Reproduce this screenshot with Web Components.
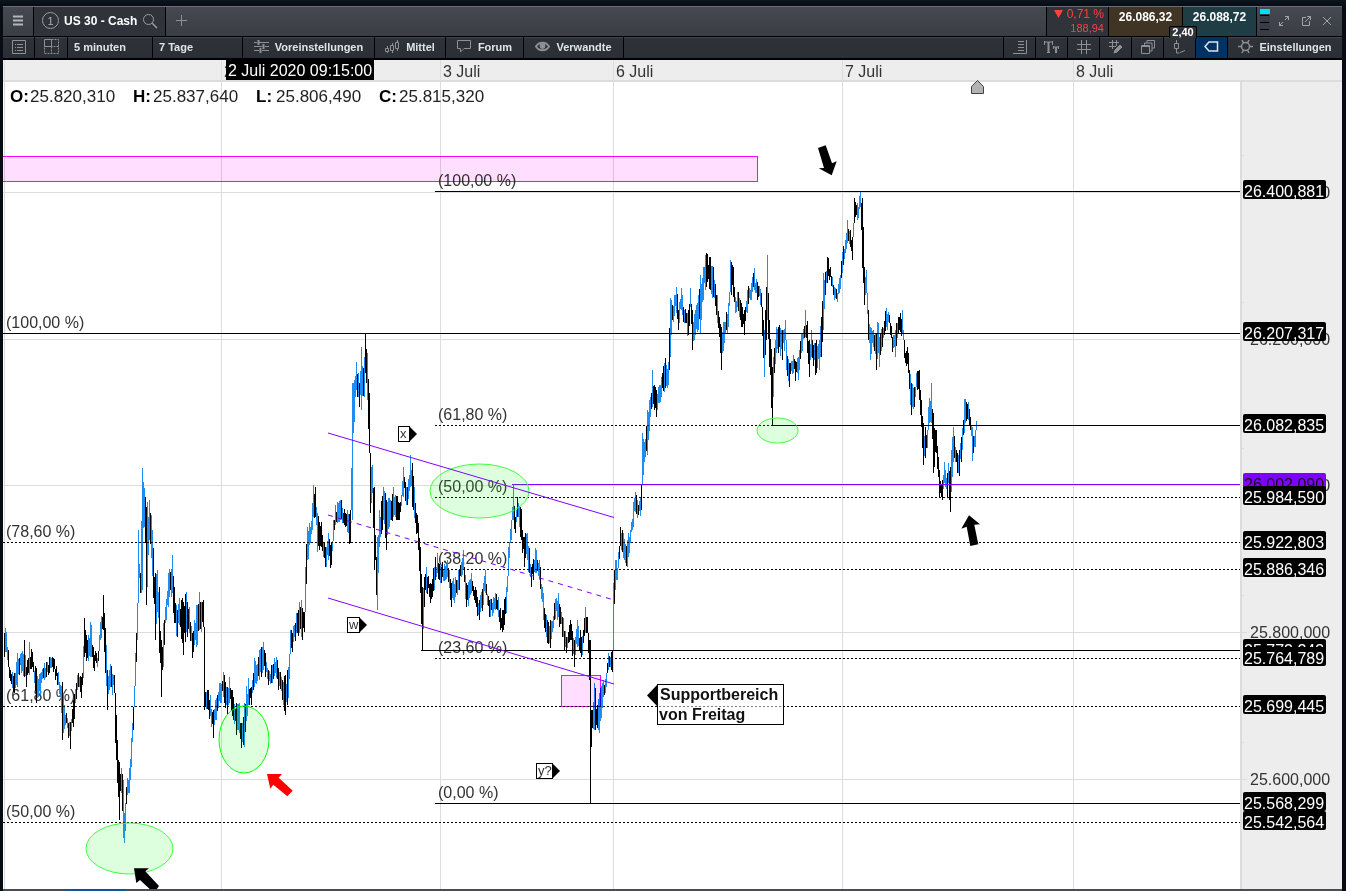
<!DOCTYPE html>
<html lang="de">
  <head>
    <meta charset="utf-8" />
    <title>US 30 - Cash</title>
    <style>
      body {
        margin: 0;
        background: #070c14;
        font-family: 'Liberation Sans', Arial, sans-serif;
      }
    </style>
  </head>
  <body>
    <template id="chartWindowTemplate">
      <style>
        :host {
          display: flex;
          flex-direction: column;
          box-sizing: border-box;
          height: 100vh;
          padding: 6px 4px 0 3px;
          overflow: hidden;
          background: linear-gradient(#0b161e, #070c14 6px);
        }

        footer {
          height: 2px;
          background: linear-gradient(90deg, #4a4d55 62px, #10559a 62px 122px, #4a4d55 122px);
        }
      </style>
      <slot></slot>
      <footer></footer>
    </template>

    <template id="titleBarTemplate">
      <style>
        :host {
          display: flex;
          height: 29px;
          border-top: 1px solid #6a6d77;
          border-bottom: 1px solid #000;
          background: linear-gradient(#464952, #3a3d44);
          color: #fff;
          font-size: 12px;
          font-weight: bold;
        }
      </style>
      <slot></slot>
    </template>

    <template id="symbolTabTemplate">
      <style>
        :host {
          display: flex;
          align-items: center;
          gap: 5px;
          padding: 0 7px 2px 8px;
          border: 1px solid #000;
          border-width: 0 1px;
          background: #30333a;
        }

        button {
          display: flex;
          padding: 0;
          border: 0;
          background: none;
        }

        svg {
          fill: none;
          stroke: #9a9da2;
        }

        i {
          display: flex;
          align-items: center;
          justify-content: center;
          width: 15px;
          height: 15px;
          border: 1px solid #9a9da2;
          border-radius: 50%;
          color: #b0b2b6;
          font-style: normal;
          font-weight: normal;
          font-size: 11px;
        }
      </style>
      <i>1</i>
      <slot></slot>
      <button aria-label="Suchen">
        <svg width="16" height="16">
          <circle cx="6.5" cy="6.5" r="5" />
          <path d="M10.2 10.2L15 15" stroke-width="1.5" />
        </svg>
      </button>
    </template>

    <template id="toolBarTemplate">
      <style>
        :host {
          display: flex;
          height: 21px;
          border-bottom: 2px solid #000;
          background: linear-gradient(#41444b 1px, #2f3239 1px, #2b2e35);
        }
      </style>
      <slot></slot>
    </template>

    <template id="toolButtonTemplate">
      <style>
        :host {
          display: flex;
          box-sizing: border-box;
          border-right: 1px solid #000;
        }

        :host([first]) {
          margin-left: auto;
          border-left: 1px solid #000;
        }

        :host([last]) {
          border: 0;
        }

        :host([active]) {
          background: #003264;
        }

        button {
          display: flex;
          flex: 1;
          align-items: center;
          justify-content: center;
          gap: 6px;
          padding: 0 0 2px;
          border: 0;
          background: none;
          color: #dce6e6;
          font: bold 11px 'Liberation Sans', Arial, sans-serif;
          white-space: nowrap;
        }

        :host([left]) button {
          justify-content: flex-start;
          padding-left: 6px;
        }

        ::slotted(svg) {
          fill: none;
          stroke: #8d9196;
        }

        :host([active]) ::slotted(svg) {
          stroke: #dce6e6;
        }
      </style>
      <button><slot></slot></button>
    </template>

    <template id="quoteBoxTemplate">
      <style>
        :host {
          position: relative;
          display: flex;
          margin-left: auto;
          border-left: 1px solid #000;
        }

        .change {
          width: 57px;
          padding-right: 4px;
          background: #30333a;
          color: #ff4040;
          font-weight: normal;
          line-height: 15px;
          text-align: right;
        }

        .change small {
          display: block;
          font-size: 11px;
          line-height: 12px;
        }

        button {
          width: 74px;
          padding: 0 0 9px;
          border: 0;
          border-left: 1px solid #000;
          color: #fff;
          font: bold 12px 'Liberation Sans', Arial, sans-serif;
        }

        .sell {
          background: #403424;
        }

        .buy {
          background: #1f3d44;
        }

        output {
          position: absolute;
          right: 59px;
          top: 19px;
          width: 26px;
          border: 1px solid #000;
          border-bottom: 0;
          border-radius: 2px 2px 0 0;
          background: #30333a;
          font-size: 11px;
          line-height: 11px;
          text-align: center;
        }
      </style>
      <div class="change">
        <svg width="9" height="8"><path d="M0 0H9L4.500 8z" fill="#ff4040" /></svg>
        0,71 %<small>188,94</small>
      </div>
      <button class="sell">26.086,32</button>
      <button class="buy">26.088,72</button>
      <output>2,40</output>
    </template>

    <template id="windowControlsTemplate">
      <style>
        :host {
          display: flex;
          align-items: center;
          width: 85px;
          border-left: 1px solid #000;
        }

        .depth {
          margin: 0 -2px 0 3px;
        }

        button {
          display: flex;
          margin-left: 10px;
          padding: 0 0 2px;
          border: 0;
          background: none;
        }

        button svg {
          fill: none;
          stroke: #a2a5aa;
        }
      </style>
      <svg class="depth" width="10" height="26">
        <rect width="10" height="26" fill="#393c46" />
        <rect width="10" height="5" fill="#00dcff" />
        <path d="M0 6h9v1H0zM0 13h9v1H0zM0 20h9v1H0z" />
      </svg>
      <button aria-label="Vergrößern">
        <svg width="12" height="12">
          <path d="M7 1.500h3.500V5M10.500 1.500L7 5M1.500 7v3.500H5M1.500 10.500L5 7" />
        </svg>
      </button>
      <button aria-label="Loslösen">
        <svg width="12" height="12">
          <path d="M6 2.500H2.500v8h7V6M7 1.500h3.500V5M10.500 1.500L5 7" />
        </svg>
      </button>
      <button aria-label="Schließen">
        <svg width="10" height="12"><path d="M1 2l8 8M9 2l-8 8" /></svg>
      </button>
    </template>

    <template id="priceChartTemplate">
      <style>
        :host {
          display: grid;
          flex: 1;
          grid-template: 20px minmax(0, 1fr) / minmax(0, 1fr) 102px;
          min-height: 0;
          background: #fff;
        }

        svg {
          display: block;
          width: 100%;
          height: 100%;
          overflow: hidden;
          font-size: 16px;
        }

        .dates {
          grid-column: 1 / 3;
          background: #ededed;
        }

        .plot {
          position: relative;
          min-height: 0;
        }

        .scale {
          background: #ededed;
        }

        .grid {
          fill: #dcdcdc;
        }

        .text {
          fill: #333;
        }

        .up {
          fill: #1e8cf0;
        }

        .zone {
          fill: #ffdcff;
          fill-opacity: 0.95;
          stroke: #f0f;
          mix-blend-mode: multiply;
        }

        .mark {
          fill: #00ff00;
          fill-opacity: 0.13;
          stroke: #3cff3c;
        }

        .channel {
          stroke: #8000ff;
        }

        dl {
          position: absolute;
          top: 7px;
          left: 7px;
          display: grid;
          grid-template-columns: repeat(4, 123px);
          margin: 0;
          font-size: 17px;
          line-height: 20px;
        }

        dl div {
          display: flex;
        }

        dt {
          min-width: 20px;
          font-weight: bold;
        }

        dd {
          margin: 0;
          color: #222;
        }
      </style>
      <svg class="dates"></svg>
      <div class="plot">
        <svg></svg>
        <dl>
          <div><dt>O:</dt><dd>25.820,310</dd></div>
          <div><dt>H:</dt><dd>25.837,640</dd></div>
          <div><dt>L:</dt><dd>25.806,490</dd></div>
          <div><dt>C:</dt><dd>25.815,320</dd></div>
        </dl>
      </div>
      <svg class="scale"></svg>
    </template>

    <script type="text/javascript">
      class TemplateElement extends HTMLElement {
        constructor() {
          super();
          this.attachShadow({ mode: 'open' });
          this.shadowRoot.append(
            document
              .getElementById(this.constructor.template)
              .content.cloneNode(true)
          );
        }
      }

      class ChartWindow extends TemplateElement {
        static template = 'chartWindowTemplate';
      }

      class TitleBar extends TemplateElement {
        static template = 'titleBarTemplate';
      }

      class SymbolTab extends TemplateElement {
        static template = 'symbolTabTemplate';
      }

      class ToolBar extends TemplateElement {
        static template = 'toolBarTemplate';
      }

      class ToolButton extends TemplateElement {
        static template = 'toolButtonTemplate';

        connectedCallback() {
          const name = this.getAttribute('name');
          if (name) {
            this.shadowRoot.querySelector('button').ariaLabel = name;
          }
          if (this.hasAttribute('width')) {
            this.style.width = this.getAttribute('width') + 'px';
          }
        }
      }

      class QuoteBox extends TemplateElement {
        static template = 'quoteBoxTemplate';
      }

      class WindowControls extends TemplateElement {
        static template = 'windowControlsTemplate';
      }

      // x, high, low of the turning bars, in chart units
      const TURNS = `
        4,633,657 6,632,652 8,650,667 9,670,678 12,672,688 14,673,693 17,653,687 21,653,673
        24,640,677 26,667,687 29,642,675 32,652,667 36,668,703 40,673,695 44,663,680 49,657,673
        53,658,672 57,673,685 60,685,697 62,682,740 65,715,725 70,722,749 73,700,727 78,673,687
        81,677,698 83,646,678 84,618,657 87,640,658 90,622,657 93,647,668 97,658,667 100,622,640
        103,595,630 105,628,673 107,670,710 110,664,687 114,675,693 115,700,743 117,740,783
        119,762,820 121,768,793 123,780,838 124,813,843 127,778,795 129,768,793 131,738,767
        133,707,730 135,653,680 137,603,640 138,530,575 140,573,593 142,468,590 143,482,528
        145,497,543 146,507,605 149,500,540 151,515,558 153,548,598 155,573,640 157,570,612
        159,587,653 161,640,697 163,623,667 165,607,623 168,573,607 172,555,593 174,587,623
        177,610,637 179,598,625 183,602,655 186,592,632 189,607,633 192,633,658 196,605,647
        199,592,630 203,600,627 204,680,710 208,690,710 213,710,738 215,700,720 220,683,703
        223,672,697 227,687,715 229,677,703 233,697,720 236,703,735 239,703,733 241,723,748
        244,703,747 248,678,705 251,687,705 254,658,687 259,650,680 263,642,670 268,670,685
        272,665,683 276,657,678 282,680,700 285,675,715 288,667,698 290,630,650 292,633,652
        296,613,633 301,600,637 304,612,632 305,567,607 307,527,560 310,527,543 313,485,517
        315,487,517 317,513,552 321,522,547 325,547,567 328,533,560 331,543,565 333,520,540
        335,505,525 340,500,520 345,513,527 350,510,543 352,383,520 353,383,433 356,362,390
        359,383,407 361,347,410 364,357,397 365,334,373 367,353,400 369,393,453 370,453,513
        372,465,493 374,487,570 376,557,595 377,537,610 379,510,547 383,487,520 386,500,550
        389,498,527 393,487,517 399,503,520 403,467,497 407,487,505 410,455,487 412,463,507
        415,503,523 418,523,550 420,547,593 422,587,650 424,577,607 426,567,593 430,583,603
        434,567,590 437,553,573 441,567,583 447,560,577 451,583,607 455,577,597 459,570,590
        463,550,570 466,583,607 471,573,593 475,587,603 479,600,620 485,570,593 489,600,617
        495,593,610 502,610,632 506,587,613 508,547,573 511,520,540 513,485,520 515,517,533
        517,497,517 520,507,537 524,537,567 527,533,560 531,567,587 536,550,573 539,560,580
        543,593,620 547,620,643 550,620,648 554,603,620 558,593,617 562,617,637 566,637,653
        570,620,640 574,640,667 577,620,647 581,637,657 585,607,633 587,617,633 589,640,680
        590,640,803 591,710,747 594,683,730 597,705,728 599,693,733 603,680,697 606,673,687
        608,653,670 612,651,672 613,583,633 615,560,590 617,568,580 620,527,543 622,530,552
        627,540,567 630,530,543 633,502,527 635,492,512 637,500,518 640,498,516 641,484,510
        642,433,484 644,442,462 647,410,455 650,397,417 652,370,407 656,390,417 661,377,397
        664,363,392 668,362,385 670,298,357 672,305,320 676,287,313 678,310,330 681,288,310
        683,307,322 688,310,335 690,288,307 692,310,350 695,310,335 698,295,330 700,275,333
        703,267,300 706,253,287 710,257,290 713,267,297 717,295,323 719,317,337 721,327,370
        724,322,343 728,303,327 730,260,290 733,267,297 735,297,313 737,292,307 741,303,327
        744,310,335 747,290,313 751,283,300 754,268,290 757,282,300 761,293,307 764,330,377
        766,287,340 767,255,320 769,320,367 772,367,425 773,357,397 776,327,353 778,327,353
        782,330,360 785,320,340 786,340,370 789,363,387 793,355,373 798,357,380 801,333,353
        805,310,337 809,340,377 811,330,357 815,343,375 819,340,370 821,317,357 823,273,330
        825,272,295 827,257,283 830,267,277 834,287,300 837,293,302 839,278,293 842,252,273
        845,240,253 847,220,243 852,237,260 854,198,220 857,203,220 860,192,207 862,198,268
        864,267,305 866,270,293 868,310,340 870,327,360 873,330,347 876,333,370 878,323,353
        879,337,367 882,327,347 886,308,327 889,315,323 892,337,352 895,330,357 898,317,333
        902,310,333 904,347,358 908,353,373 911,383,415 914,387,407 916,373,387 919,370,400
        921,400,427 923,423,465 927,430,448 928,407,430 931,383,423 933,413,473 936,430,453
        939,470,497 942,480,500 944,462,483 947,473,498 948,463,483 950,467,512 953,427,462
        957,453,473 959,450,476 962,428,450 964,399,433 968,402,420 970,417,430 972,427,461
        975,430,447 976,421,429`
        .trim()
        .split(/\s+/)
        .map(t => t.split(',').map(Number));

      const DAYS = [
        [4, ''],
        [221, '2 Juli'],
        [440, '3 Juli'],
        [613, '6 Juli'],
        [842, '7 Juli'],
        [1073, '8 Juli'],
      ];

      const STEPS = [
        [192, '26.400,000'],
        [339, '26.200,000'],
        [485, '26.000,000'],
        [632, '25.800,000'],
        [779, '25.600,000'],
      ];

      // y, price, start x, dotted
      const LEVELS = [
        [191, '26.400,881', 435, false],
        [333, '26.207,317', 3, false],
        [425, '26.082,835', 772, false],
        [484, '26.002,090', 512, false],
        [497, '25.984,590', 435, true],
        [542, '25.922,803', 3, true],
        [569, '25.886,346', 435, true],
        [650, '25.773,243', 421, false],
        [658, '25.764,789', 435, true],
        [706, '25.699,445', 3, true],
        [803, '25.568,299', 435, false],
        [822, '25.542,564', 3, true],
      ];

      const RATIOS = [
        [438, 191, '100,00'],
        [438, 425, '61,80'],
        [438, 497, '50,00'],
        [438, 569, '38,20'],
        [438, 658, '23,60'],
        [438, 803, '0,00'],
        [6, 333, '100,00'],
        [6, 542, '78,60'],
        [6, 706, '61,80'],
        [6, 822, '50,00'],
      ];

      const noise = n => {
        const v = Math.sin(n * 12.9898) * 43758.5453;
        return v - Math.floor(v);
      };

      class PriceChart extends TemplateElement {
        static template = 'priceChartTemplate';

        connectedCallback() {
          const [dates, plot, scale] = this.shadowRoot.querySelectorAll('svg');
          dates.innerHTML = `<g transform="translate(-3 -60)">${this.dates()}</g>`;
          plot.innerHTML = `<g transform="translate(-3 -80)">${this.plot()}</g>`;
          scale.innerHTML = `<g transform="translate(-1240 -80)">${this.scale()}</g>`;
        }

        dates() {
          return (
            DAYS.map(
              ([x, label]) => `
                <rect class="grid" x="${x}" y="60" width="1" height="20" />
                <text class="text" x="${x + 3}" y="77">${label}</text>`
            ).join('') +
            `<rect x="226" y="60" width="148" height="20" />
             <text x="228" y="76" fill="#fff">2 Juli 2020 09:15:00</text>`
          );
        }

        bars() {
          let up = '';
          let down = '';
          let last = null;
          const bar = (x, top, bottom, rising) => {
            // stretch over a jump so that neighbouring bars always touch
            let from = top;
            let to = bottom;
            if (last && last[1] < top) from = last[1];
            if (last && last[0] > bottom) to = last[0];
            last = [top, bottom];
            const d = `M${x} ${Math.round(from)}h1V${Math.round(to)}h-1z`;
            if (rising) up += d;
            else down += d;
          };
          TURNS.forEach(([x, top, bottom], i) => {
            const next = TURNS[i + 1] || [x + 1, top, bottom];
            const prev = TURNS[i - 1] || TURNS[i];
            const before = prev[1] + prev[2] > top + bottom;
            bar(x, top, bottom, noise(x) < 0.2 ? !before : before);
            const steps = next[0] - x;
            const rising = next[1] + next[2] < top + bottom;
            for (let k = 1; k < steps; k++) {
              const t = k / steps;
              const mid = (top + bottom) / 2 + (t * (next[1] + next[2] - top - bottom)) / 2;
              const half = ((bottom - top) * (1 - t) + (next[2] - next[1]) * t) / 2;
              const shift = (noise(x + k + 7) - 0.5) * 10;
              const size = Math.max(5, half * (0.4 + noise(x + k + 31) * 0.7));
              bar(x + k, mid + shift - size, mid + shift + size, noise(x + k) < 0.35 ? !rising : rising);
            }
          });
          return `<path class="up" d="${up}" /><path d="${down}" />`;
        }

        flag(x, y, width, label) {
          return `
            <rect x="${x + 0.5}" y="${y + 0.5}" width="${width}" height="15" fill="#fff" stroke="#000" />
            <path d="M${x + width} ${y}l8 8l-8 8z" />
            <text x="${x + 2}" y="${y + 12}" font-size="13" class="text">${label}</text>`;
        }

        plot() {
          const grid =
            DAYS.map(([x]) => `<rect class="grid" x="${x}" y="80" width="1" height="100%" />`).join('') +
            STEPS.map(([y]) => `<rect class="grid" x="3" y="${y}" width="100%" height="1" />`).join('');
          const levels = LEVELS.map(
            ([y, , x, dotted]) => `
              <line x1="${x}" x2="110%" y1="${y + 0.5}" y2="${y + 0.5}"
                stroke="${y === 484 ? '#8000ff' : '#000'}" ${dotted ? 'stroke-dasharray="2 2"' : ''} />`
          ).join('');
          const ratios = RATIOS.map(
            ([x, y, value]) => `<text class="text" x="${x}" y="${y - 5}">(${value} %)</text>`
          ).join('');
          return `
            ${grid}
            <rect class="grid" x="3" y="80" width="100%" height="2" />
            ${ratios}
            ${this.bars()}
            ${levels}
            <path d="M435 425.500H772" stroke="#000" stroke-dasharray="2 2" />
            <rect class="zone" x="0.500" y="156.500" width="757" height="25" />
            <rect class="zone" x="561.500" y="675.500" width="39" height="31" />
            <ellipse class="mark" cx="129.500" cy="848.500" rx="43.500" ry="25.500" />
            <ellipse class="mark" cx="244" cy="739.500" rx="25" ry="33.500" style="stroke: #00ff00" />
            <ellipse class="mark" cx="479.500" cy="491" rx="49.500" ry="27" />
            <ellipse class="mark" cx="777.500" cy="430.500" rx="20.500" ry="12.500" />
            <g class="channel">
              <path d="M328 433L614 517.500M328 598L614 684" />
              <path d="M328 515L614 600" stroke-dasharray="5 5" />
            </g>
            <path d="M818 148L825.700 145.300L832 163.300L836.700 161.300L831.700 175.300L818.700 168.300L824 168z" />
            <path d="M969 515.300L980 524.300L974.300 524.700L978.300 544.300L970.300 546L966.700 526.700L961.300 528.700z" />
            <path d="M267 774H282L278.700 777.700L292.700 790.700L287.300 796.300L273.300 784.700L270.300 788.700z" fill="#f00" />
            <path d="M134 868.300H149L145.300 871.300L159 886L154 893L140 880L136.300 883z" />
            <path d="M971.500 93.500V86.500L977.500 80.500L983.500 86.500V93.500z" fill="#b3b3b3" stroke="#444" />
            ${this.flag(398, 426, 11, 'x')}
            ${this.flag(347, 617, 12, 'w')}
            ${this.flag(536, 763, 16, 'y?')}
            <path d="M647 695.500L657 685V706z" />
            <rect x="657.500" y="684.500" width="126" height="40" fill="#fff" fill-opacity="0.5" stroke="#000" />
            <text font-weight="bold" fill="#111">
              <tspan x="660" y="700">Supportbereich</tspan>
              <tspan x="659" y="720">von Freitag</tspan>
            </text>`;
        }

        scale() {
          const steps = STEPS.map(
            ([y, label]) => `
              <rect class="grid" x="1240" y="${y}" width="7" height="1" />
              <rect class="grid" x="1240" y="${y - 37}" width="4" height="1" />
              <text class="text" x="1250" y="${y + 6}">${label}</text>`
          ).join('');
          const tags = LEVELS.map(
            ([y, price]) => `
              <rect x="1243" y="${y - 11}" width="83" height="19" rx="2" fill="${y === 484 ? '#8000ff' : '#000'}" />
              <text x="1244" y="${y + 6}" fill="${y === 484 ? '#111' : '#fff'}">${price}</text>`
          ).join('');
          return `
            <rect class="grid" x="1240" y="80" width="102" height="2" />
            <rect class="grid" x="1240" y="80" width="2" height="100%" />
            ${steps}${tags}`;
        }
      }

      customElements.define('chart-window', ChartWindow);
      customElements.define('title-bar', TitleBar);
      customElements.define('symbol-tab', SymbolTab);
      customElements.define('tool-bar', ToolBar);
      customElements.define('tool-button', ToolButton);
      customElements.define('quote-box', QuoteBox);
      customElements.define('window-controls', WindowControls);
      customElements.define('price-chart', PriceChart);
    </script>

    <chart-window>
      <title-bar>
        <tool-button name="Menü" width="30" last>
          <svg width="10" height="11"><path d="M0 1.500h10M0 5.500h10M0 9.500h10" stroke-width="2" stroke="#b4b6ba" /></svg>
        </tool-button>
        <symbol-tab>US 30 - Cash</symbol-tab>
        <tool-button name="Neuer Tab" width="30" last>
          <svg width="11" height="11"><path d="M0 5.500h11M5.500 0v11" /></svg>
        </tool-button>
        <quote-box></quote-box>
        <window-controls></window-controls>
      </title-bar>

      <tool-bar>
        <tool-button name="Liste" width="32">
          <svg width="14" height="14">
            <path d="M.5.500h13v13H.5zM3 4.500h1M5 4.500h6M3 7.500h1M5 7.500h6M3 10.500h1M5 10.500h6" />
          </svg>
        </tool-button>
        <tool-button name="Layout" width="33">
          <svg width="15" height="15">
            <path d="M.5.500h7v7h-7z" />
            <path d="M7.500.500h7v14H.5v-7h14M7.500 7.500v7" stroke-dasharray="2 1" />
          </svg>
        </tool-button>
        <tool-button width="85" left>5 minuten</tool-button>
        <tool-button width="90" left>7 Tage</tool-button>
        <tool-button width="132">
          <svg width="15" height="13">
            <path d="M0 2.500h3M5 2.500h10M0 6.500h8M11 6.500h4M0 10.500h5M8 10.500h7" />
            <path d="M4.500 0v5M9.500 4v5M6.500 8v5" stroke-width="2" />
          </svg>
          Voreinstellungen
        </tool-button>
        <tool-button width="71">
          <svg width="15" height="14">
            <path d="M.5 8.500h3v3h-3zM5.500 5.500h3v5h-3zM10.500 2.500h3v6h-3zM2.500 6v2M2.500 12v1M7.500 3v2M7.500 11v2M12.500 0v2M12.500 9v2" />
          </svg>
          Mittel
        </tool-button>
        <tool-button width="78">
          <svg width="15" height="13"><path d="M.5.500h13v8H7l-3.500 3.500V8.500H.5z" /></svg>
          Forum
        </tool-button>
        <tool-button width="100">
          <svg width="15" height="11">
            <path d="M1 5.500C4 .5 11 .5 14 5.500C11 10.500 4 10.500 1 5.500z" stroke-width="2" />
            <circle cx="7.500" cy="5" r="2.500" fill="#8d9196" />
          </svg>
          Verwandte
        </tool-button>

        <tool-button name="Preisskala" width="33" first>
          <svg width="14" height="14">
            <path d="M5 1.500h6M5 4.500h6M5 7.500h6M5 10.500h6M0 13.500h13.500V0" />
          </svg>
        </tool-button>
        <tool-button name="Text" width="32">
          <svg width="15" height="12">
            <path d="M4.500 1v10M12 6v5" stroke-width="2" />
            <path d="M0 1h9M3 11.500h3M.5 0v4M8.500 0v4M9 6h6M11 11.500h2M9.500 5v3M14.500 5v3" />
          </svg>
        </tool-button>
        <tool-button name="Raster" width="32">
          <svg width="14" height="14"><path d="M4.500 0v14M9.500 0v14M0 4.500h14M0 9.500h14" /></svg>
        </tool-button>
        <tool-button name="Zeichnen" width="32">
          <svg width="14" height="14">
            <path d="M3.500 0v9M7.500 0v6M0 2.500h10M0 6.500h7" />
            <path d="M5 13l1-3l5-5l2 2l-5 5z" fill="#8d9196" />
          </svg>
        </tool-button>
        <tool-button name="Ebenen" width="32">
          <svg width="14" height="14">
            <path d="M.5 5.500h8v8h-8zM3.500 5V3h7.500v8H9M6 3V.5h7.500V8H11" />
            <path d="M0 6.500h9" />
          </svg>
        </tool-button>
        <tool-button name="Kerze" width="32">
          <svg width="11" height="14">
            <path d="M.5 3.500h4v5h-4zM2.500 0v3M2.500 9v4h3M6 12.500l5-2" />
          </svg>
        </tool-button>
        <tool-button name="Marke" width="32" active>
          <svg width="15" height="11"><path d="M1 5.500L5 1h8.500v9H5z" stroke-width="1.500" /></svg>
        </tool-button>
        <tool-button width="114" last>
          <svg width="15" height="13">
            <circle cx="7.500" cy="6.500" r="4" stroke-width="1.500" />
            <path d="M0 6.500h3M12 6.500h3M4 0l1.500 3M11 0L9.500 3M4 13l1.500-3M11 13l-1.500-3" stroke-width="1.500" />
          </svg>
          Einstellungen
        </tool-button>
      </tool-bar>

      <price-chart></price-chart>
    </chart-window>
  </body>
</html>
